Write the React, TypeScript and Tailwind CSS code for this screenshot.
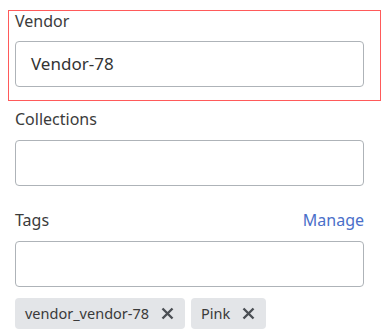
import React from "react";

const XIcon = () => (
  <svg width="13" height="13" viewBox="0 0 13 13" className="shrink-0">
    <path d="M1.5 1.5 L11.5 11.5 M11.5 1.5 L1.5 11.5" stroke="#4b4f54" strokeWidth="2.4" strokeLinecap="butt" />
  </svg>
);

const Chip = ({ label }: { label: string }) => (
  <div className="flex h-[31px] items-center gap-[12px] rounded-[4px] bg-[#e3e5e8] pl-[10px] pr-[11px] text-[14.5px] text-[#3a3a3a]">
    <span>{label}</span>
    <XIcon />
  </div>
);

export default function App() {
  return (
    <div
      className="h-[336px] w-[387px] overflow-hidden bg-white pt-[10px] text-[#3b3b3b]"
      style={{ fontFamily: '"Noto Sans", "Open Sans", sans-serif' }}
    >
      <div className="ml-2 w-[373px] border border-[#ff5a5a] pb-[13px] pl-[6px] pr-4">
        <label className="block text-[16px] leading-5 mb-[10px]">Vendor</label>
        <div className="flex h-[46px] w-[349px] items-center rounded-[4px] border border-[#aeb3b8] pl-[15px] text-[17px] text-[#333]">
          Vendor-78
        </div>
      </div>
      <div className="mt-2 pl-[15px]">
        <label className="block text-[16px] leading-5 mb-[11px]">Collections</label>
        <div className="h-[46px] w-[349px] rounded-[4px] border border-[#aeb3b8]" />
      </div>
      <div className="mt-6 pl-[15px]">
        <div className="mb-[11px] flex w-[349px] items-center justify-between text-[16px] leading-5">
          <span>Tags</span>
          <span className="text-[#4a6fc9]">Manage</span>
        </div>
        <div className="h-[46px] w-[349px] rounded-[4px] border border-[#aeb3b8]" />
        <div className="mt-[11px] flex gap-[6px]">
          <Chip label="vendor_vendor-78" />
          <Chip label="Pink" />
        </div>
      </div>
    </div>
  );
}
